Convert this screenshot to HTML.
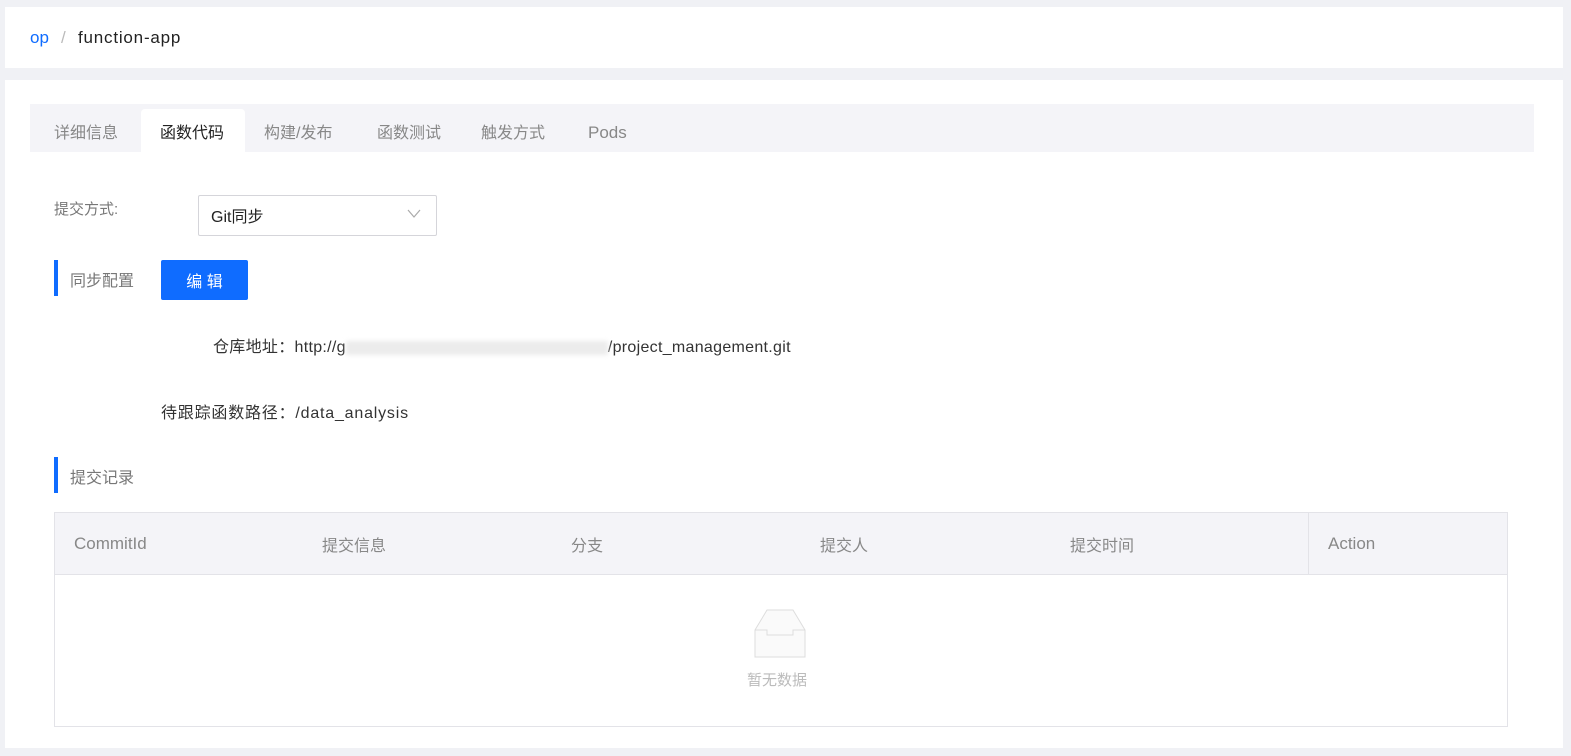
<!DOCTYPE html>
<html><head><meta charset="utf-8"><style>
*{margin:0;padding:0;box-sizing:border-box}
body{width:1571px;height:756px;background:#f0f1f5;font-family:"Liberation Sans","Noto Sans CJK SC",sans-serif;position:relative;overflow:hidden;color:#333}
.a{position:absolute;white-space:nowrap}
.card{position:absolute;background:#fff;left:5px;width:1558px}
</style></head><body>
<div class="card" style="top:7px;height:61px"></div>
<div class="a" style="left:30px;top:28px;font-size:17px;color:#0f6cff">op</div>
<div class="a" style="left:61px;top:28px;font-size:17px;color:#bbb">/</div>
<div class="a" style="left:78px;top:28px;font-size:17px;color:#222;letter-spacing:.8px">function-app</div>

<div class="card" style="top:80px;height:668px"></div>
<div class="a" style="left:30px;top:104px;width:1504px;height:48px;background:#f4f4f8"></div>
<div class="a" style="left:141px;top:109px;width:104px;height:43px;background:#fff;border-radius:4px 4px 0 0"></div>
<div class="a" style="left:54px;top:119px;font-size:16px;color:#888">详细信息</div>
<div class="a" style="left:160px;top:119px;font-size:16px;color:#222">函数代码</div>
<div class="a" style="left:264px;top:119px;font-size:16px;color:#888">构建/发布</div>
<div class="a" style="left:377px;top:119px;font-size:16px;color:#888">函数测试</div>
<div class="a" style="left:481px;top:119px;font-size:16px;color:#888">触发方式</div>
<div class="a" style="left:588px;top:123px;font-size:17px;color:#888">Pods</div>

<div class="a" style="left:54px;top:198px;font-size:15px;color:#777">提交方式:</div>
<div class="a" style="left:198px;top:195px;width:239px;height:41px;border:1px solid #d5d5da;border-radius:2px"></div>
<div class="a" style="left:211px;top:203px;font-size:16px;color:#222">Git同步</div>
<svg class="a" style="left:407px;top:209px" width="14" height="10"><path d="M1 1l6 7 6-7" fill="none" stroke="#aaa" stroke-width="1.2"/></svg>

<div class="a" style="left:54px;top:260px;width:4px;height:36px;background:#0f6cff"></div>
<div class="a" style="left:70px;top:267px;font-size:16px;color:#777">同步配置</div>
<div class="a" style="left:161px;top:260px;width:87px;height:40px;background:#0f6cff;border-radius:2px;color:#fff;font-size:16px;text-align:center;line-height:40px;padding-top:3px">编 辑</div>

<div class="a" style="left:213px;top:333px;font-size:16px;color:#333;letter-spacing:.3px">仓库地址：http://g<span style="display:inline-block;width:262px;height:14px;background:#ececec;vertical-align:middle;filter:blur(2px)"></span>/project_management.git</div>
<div class="a" style="left:161px;top:399px;font-size:16px;color:#333;letter-spacing:.8px">待跟踪函数路径：/data_analysis</div>

<div class="a" style="left:54px;top:457px;width:4px;height:36px;background:#0f6cff"></div>
<div class="a" style="left:70px;top:464px;font-size:16px;color:#777">提交记录</div>

<div class="a" style="left:54px;top:512px;width:1454px;height:215px;border:1px solid #e3e3e8"></div>
<div class="a" style="left:55px;top:513px;width:1452px;height:62px;background:#f4f4f8;border-bottom:1px solid #e3e3e8"></div>
<div class="a" style="left:1308px;top:513px;width:1px;height:62px;background:#e3e3e8"></div>
<div class="a" style="left:74px;top:534px;font-size:17px;color:#888">CommitId</div>
<div class="a" style="left:322px;top:532px;font-size:16px;color:#888">提交信息</div>
<div class="a" style="left:571px;top:532px;font-size:16px;color:#888">分支</div>
<div class="a" style="left:820px;top:532px;font-size:16px;color:#888">提交人</div>
<div class="a" style="left:1070px;top:532px;font-size:16px;color:#888">提交时间</div>
<div class="a" style="left:1328px;top:534px;font-size:17px;color:#888">Action</div>

<svg class="a" style="left:740px;top:606px" width="80" height="54">
<ellipse cx="40" cy="44" rx="23" ry="7" fill="#f1f1f1"/>
<path d="M27 4h26l12 20v27H15V24z" fill="#fafafa" stroke="#ddd"/>
<path d="M15 24h12v5h26v-5h12" fill="none" stroke="#ddd"/>
</svg>
<div class="a" style="left:747px;top:669px;font-size:15px;color:#bbb">暂无数据</div>
</body></html>
